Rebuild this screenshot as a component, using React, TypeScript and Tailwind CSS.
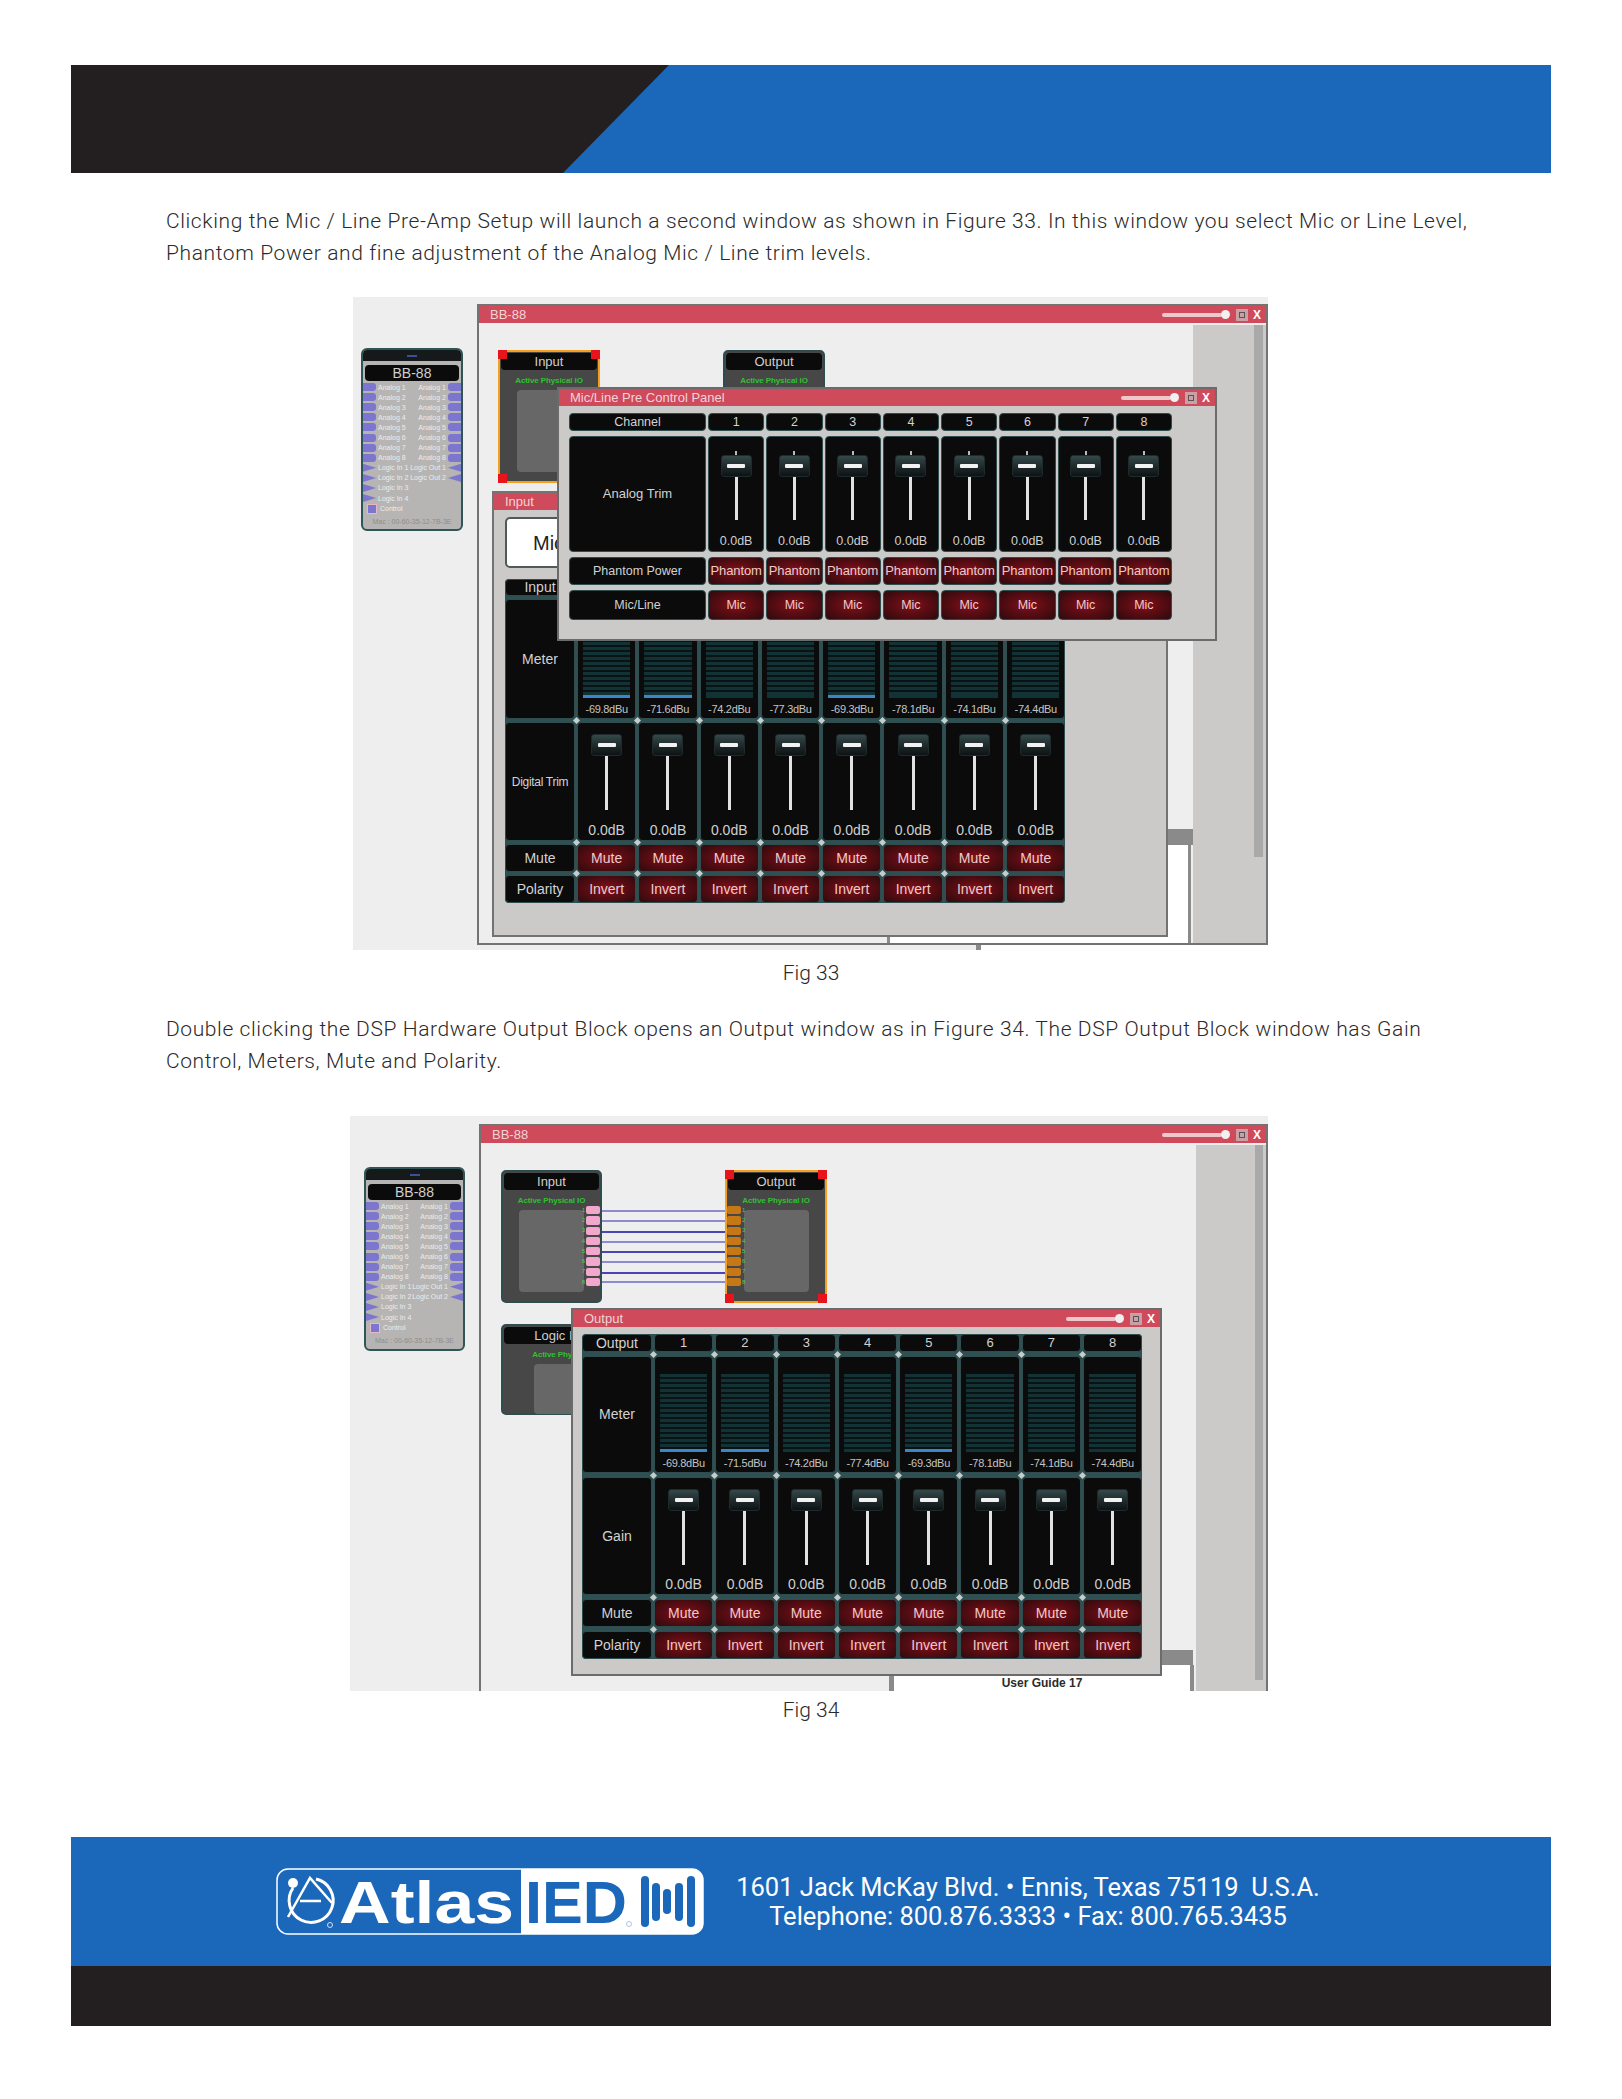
const channels = [1, 2, 3, 4, 5, 6, 7, 8];

const meterInput = ['-69.8dBu', '-71.6dBu', '-74.2dBu', '-77.3dBu', '-69.3dBu', '-78.1dBu', '-74.1dBu', '-74.4dBu'];
const meterOutput = ['-69.8dBu', '-71.5dBu', '-74.2dBu', '-77.4dBu', '-69.3dBu', '-78.1dBu', '-74.1dBu', '-74.4dBu'];
const activeMeters = [0, 1, 4];

const cellBase = 'relative flex items-center justify-center rounded-[4px] border border-[#2f4d4e] text-[#d2d2d2]';
const darkCell = `${cellBase} bg-[#0b0b0b]`;
const redCell = `${cellBase} bg-[radial-gradient(ellipse_at_center,#86101a_0%,#5c0c13_45%,#2b0b0d_100%)] text-[#eccbcb]`;

function Dot() {
  return <span className="absolute -left-[4px] -top-[5px] z-10 h-[5px] w-[5px] rotate-45 bg-[#c5cccc]" />;
}

function TitleBar({ title, wide }: { title: string; wide?: boolean }) {
  return (
    <div className="flex h-[17px] shrink-0 items-center bg-[#cf4a5b] pl-[11px] pr-[4px] text-[13px] text-[#f0d5d8]">
      <span>{title}</span>
      <div className="ml-auto flex items-center">
        <span className={wide ? 'h-[4px] w-[60px] rounded-full bg-[#eec9cc]' : 'h-[4px] w-[50px] rounded-full bg-[#eec9cc]'} />
        <span className="-ml-[1px] h-[9px] w-[9px] rounded-full bg-[#f0f0f0]" />
        <span className="ml-[6px] flex h-[12px] w-[12px] items-center justify-center bg-[#c9a0a5]">
          <span className="h-[6px] w-[6px] border border-[#555]" />
        </span>
        <span className="ml-[4px] w-[10px] text-center text-[12px] font-bold leading-none text-white">X</span>
      </div>
    </div>
  );
}

function Slider({ tick, track }: { tick?: boolean; track: string }) {
  return (
    <div className="flex h-full w-full flex-col items-center">
      {tick ? <span className="mt-[14px] h-[4px] w-[2px] bg-[#bbb]" /> : <span className="mt-[11px]" />}
      <div className="flex h-[22px] w-[31px] items-center justify-center rounded-[3px] border border-[#1d2b2c] bg-gradient-to-b from-[#34484a] to-[#0e1314]">
        <span className="h-[4px] w-[18px] rounded-[1px] bg-[#f2f2f2]" />
      </div>
      <span className={track} />
      <span className="mt-auto pb-[2px] leading-[16px] text-[#cfcfcf]">0.0dB</span>
    </div>
  );
}

function Meter({ value, active }: { value: string; active: boolean }) {
  return (
    <div className="flex h-full w-full flex-col px-[5px] pt-[17px]">
      <div className="flex-1 bg-[repeating-linear-gradient(to_bottom,#113335_0,#113335_3px,#0b1213_3px,#0b1213_5px)]" />
      <span className={active ? 'h-[3px] bg-[#3a86c8]' : 'h-[3px] bg-[#113335]'} />
      <span className="h-[20px] whitespace-nowrap text-center text-[11px] leading-[22px] tracking-[-0.3px] text-[#c4c4c4]">{value}</span>
    </div>
  );
}

function MicPanel() {
  return (
    <div className="absolute left-[204px] top-[90px] z-20 flex h-[254px] w-[660px] flex-col border-2 border-[#6b6b6b] bg-[#cbcac8]">
      <TitleBar title="Mic/Line Pre Control Panel" />
      <div className="grid grid-cols-[137px_repeat(8,56.25px)] grid-rows-[18px_116px_28px_30px] gap-x-[2px] gap-y-[5px] pl-[10px] pt-[7px] text-[12.5px]">
        <div className={darkCell}>Channel</div>
        {channels.map((c) => (
          <div key={c} className={darkCell}>{c}</div>
        ))}
        <div className={`${darkCell} text-[13px]`}>Analog Trim</div>
        {channels.map((c) => (
          <div key={c} className={darkCell}>
            <Dot />
            <Slider tick track="h-[43px] w-[3px] bg-[#e2e2e2]" />
          </div>
        ))}
        <div className={darkCell}>Phantom Power</div>
        {channels.map((c) => (
          <div key={c} className={`${redCell} text-[13px] tracking-[-0.1px]`}>
            <Dot />
            Phantom
          </div>
        ))}
        <div className={darkCell}>Mic/Line</div>
        {channels.map((c) => (
          <div key={c} className={redCell}>
            <Dot />
            Mic
          </div>
        ))}
      </div>
    </div>
  );
}

function ChannelGrid({
  head,
  meters,
  trim,
  trimClass,
  rowsClass,
}: {
  head: string;
  meters: string[];
  trim: string;
  trimClass?: string;
  rowsClass: string;
}) {
  return (
    <div className={`grid w-fit grid-cols-[70px_repeat(8,59.3px)] gap-x-[2px] rounded-[4px] bg-[#2f5052] text-[14px] ${rowsClass}`}>
      <div className={darkCell}>{head}</div>
      {channels.map((c) => (
        <div key={c} className={`${darkCell} text-[13px]`}>{c}</div>
      ))}
      <div className={darkCell}>Meter</div>
      {meters.map((m, i) => (
        <div key={m} className={darkCell}>
          <Dot />
          <Meter value={m} active={activeMeters.includes(i)} />
        </div>
      ))}
      <div className={`${darkCell} ${trimClass ?? ''}`}>{trim}</div>
      {channels.map((c) => (
        <div key={c} className={darkCell}>
          <Dot />
          <Slider track="h-[54px] w-[3px] bg-[#e2e2e2]" />
        </div>
      ))}
      <div className={darkCell}>Mute</div>
      {channels.map((c) => (
        <div key={c} className={redCell}>
          <Dot />
          Mute
        </div>
      ))}
      <div className={darkCell}>Polarity</div>
      {channels.map((c) => (
        <div key={c} className={redCell}>
          <Dot />
          Invert
        </div>
      ))}
    </div>
  );
}

function Block({
  title,
  className,
  selected,
  hideCorner,
  ports,
  portColor,
  small,
}: {
  title: string;
  className: string;
  selected?: boolean;
  hideCorner?: boolean;
  ports?: 'left' | 'right';
  portColor?: string;
  small?: boolean;
}) {
  return (
    <div className={`absolute rounded-[5px] border-2 bg-[#474747] ${selected ? 'border-[#f2a01e]' : 'border-[#2f4d4e]'} ${className}`}>
      <div className="mx-[1px] mt-[1px] flex h-[17px] items-center justify-center rounded-[4px] bg-[#0b0b0b] text-[13px] text-[#cfcfcf]">{title}</div>
      <div className="mt-[4px] whitespace-nowrap text-center text-[8px] font-bold leading-[14px] tracking-[-0.1px] text-[#30c030]">Active Physical IO</div>
      <div className={small ? 'mx-auto mt-[2px] h-[50px] w-[65px] rounded-[4px] bg-[#676767]' : 'mx-auto mt-[2px] h-[82px] w-[65px] rounded-[4px] bg-[#676767]'} />
      {ports === 'right' && (
        <div className="absolute right-0 top-[34px] flex flex-col gap-[2px]">
          {channels.map((c) => (
            <div key={c} className="flex h-[8.3px] items-center gap-[1px]">
              <span className="text-[6px] text-[#4fd04f]">{c}</span>
              <span className={`h-[8.3px] w-[14px] rounded-[2px] ${portColor}`} />
            </div>
          ))}
        </div>
      )}
      {ports === 'left' && (
        <div className="absolute left-0 top-[34px] flex flex-col gap-[2px]">
          {channels.map((c) => (
            <div key={c} className="flex h-[8.3px] items-center gap-[1px]">
              <span className={`h-[8.3px] w-[14px] rounded-[2px] ${portColor}`} />
              <span className="text-[6px] text-[#4fd04f]">{c}</span>
            </div>
          ))}
        </div>
      )}
      {selected && (
        <>
          <span className="absolute -left-[2px] -top-[2px] h-[9px] w-[9px] bg-[#e8141c]" />
          <span className="absolute -right-[2px] -top-[2px] h-[9px] w-[9px] bg-[#e8141c]" />
          <span className="absolute -bottom-[2px] -left-[2px] h-[9px] w-[9px] bg-[#e8141c]" />
          {!hideCorner && <span className="absolute -bottom-[2px] -right-[2px] h-[9px] w-[9px] bg-[#e8141c]" />}
        </>
      )}
    </div>
  );
}

function PortRow({ left, right, tri }: { left: string; right?: string; tri?: boolean }) {
  return (
    <div className="flex h-[10.1px] items-center text-[7px] leading-none text-[#ececec]">
      <span className={tri ? 'h-[8px] w-[13px] bg-[#7d76cf] [clip-path:polygon(0_0,100%_50%,0_100%)]' : 'h-[8px] w-[13px] rounded-r-[3px] bg-[#7d76cf]'} />
      <span className="ml-[2px]">{left}</span>
      {right && <span className="ml-auto mr-[2px]">{right}</span>}
      {right && (
        <span className={tri ? 'h-[8px] w-[13px] bg-[#7d76cf] [clip-path:polygon(100%_0,0_50%,100%_100%)]' : 'h-[8px] w-[13px] rounded-l-[3px] bg-[#7d76cf]'} />
      )}
    </div>
  );
}

function Device({ className }: { className: string }) {
  return (
    <div className={`absolute overflow-hidden rounded-[6px] border-2 border-[#2f5556] bg-[#b6b5b4] ${className}`}>
      <div className="flex h-[11px] items-center justify-center bg-[#15191a]">
        <span className="h-[2px] w-[10px] bg-[#3b4f9a]" />
      </div>
      <div className="mx-[2px] mt-[4px] flex h-[16px] items-center justify-center rounded-[4px] bg-[#0b0b0b] text-[14px] text-[#cfcfcf]">BB-88</div>
      <div className="mt-[1px]">
        {channels.map((c) => (
          <PortRow key={c} left={`Analog ${c}`} right={`Analog ${c}`} />
        ))}
        <PortRow tri left="Logic In 1" right="Logic Out 1" />
        <PortRow tri left="Logic In 2" right="Logic Out 2" />
        <PortRow tri left="Logic In 3" />
        <PortRow tri left="Logic In 4" />
      </div>
      <div className="ml-[4px] mt-[1px] flex h-[10px] items-center gap-[3px] text-[7px] text-[#ececec]">
        <span className="h-[10px] w-[10px] border border-[#e8b8c8] bg-[#7d76cf]" />
        Control
      </div>
      <div className="mt-[3px] whitespace-nowrap text-center text-[7px] text-[#8d8d8d]">Mac : 00-60-35-12-7B-3E</div>
    </div>
  );
}

function WindowFrame({ className }: { className: string }) {
  return (
    <div className={`absolute flex flex-col border-2 border-[#737373] bg-[#eeeeee] ${className}`}>
      <TitleBar title="BB-88" wide />
    </div>
  );
}

function Figure33() {
  return (
    <div className="relative ml-[353px] h-[653px] w-[915px] overflow-hidden bg-[#eeeeee] font-['Liberation_Sans',sans-serif]">
      <WindowFrame className="left-[124px] top-[7px] h-[641px] w-[791px]" />
      <div className="absolute left-[840px] top-[28px] h-[618px] w-[73px] bg-[#cbcac8]" />
      <div className="absolute left-[901px] top-[28px] h-[532px] w-[9px] bg-[#a9a9a9]" />
      <div className="absolute left-[815px] top-[532px] h-[16px] w-[25px] bg-[#8a8a8a]" />
      <div className="absolute left-[815px] top-[548px] h-[98px] w-[20px] bg-white" />
      <div className="absolute left-[835px] top-[548px] h-[98px] w-[3px] bg-[#8a8a8a]" />
      <div className="absolute left-[537px] top-[640px] h-[6px] w-[298px] bg-white" />
      <div className="absolute left-[534px] top-[640px] h-[6px] w-[3px] bg-[#8a8a8a]" />
      <div className="absolute left-[623px] top-[648px] h-[5px] w-[5px] bg-[#8a8a8a]" />
      <div className="absolute left-[628px] top-[648px] h-[5px] w-[287px] bg-white" />

      <Device className="left-[8px] top-[51px] h-[183px] w-[102px]" />
      <Block title="Input" selected hideCorner className="left-[145px] top-[53px] h-[133px] w-[102px]" />
      <Block title="Output" className="left-[370px] top-[53px] h-[133px] w-[102px]" />

      <div className="absolute left-[139px] top-[194px] flex h-[446px] w-[676px] flex-col border-2 border-[#737373] bg-[#cbcac8]">
        <TitleBar title="Input" />
        <div className="pl-[11px]">
          <div className="mt-[7px] flex h-[51px] w-[200px] items-center rounded-[5px] border-2 border-[#50595a] bg-white pl-[26px] text-[20px] text-[#222]">Mic</div>
          <div className="mt-[11px]">
            <ChannelGrid
              head="Input"
              meters={meterInput}
              trim="Digital Trim"
              trimClass="text-[12px] tracking-[-0.3px]"
              rowsClass="grid-rows-[17px_120px_119px_28px_28px] gap-y-[3px]"
            />
          </div>
        </div>
      </div>

      <MicPanel />
    </div>
  );
}

const wireYs = [95, 105, 116, 126, 136, 146, 157, 166];

function Figure34() {
  return (
    <div className="relative ml-[350px] h-[575px] w-[918px] overflow-hidden bg-[#eeeeee] font-['Liberation_Sans',sans-serif]">
      <WindowFrame className="left-[129px] top-[8px] h-[570px] w-[789px]" />
      <div className="absolute left-[846px] top-[29px] h-[546px] w-[70px] bg-[#cbcac8]" />
      <div className="absolute left-[905px] top-[29px] h-[535px] w-[8px] bg-[#a9a9a9]" />
      <div className="absolute left-[811px] top-[534px] h-[15px] w-[32px] bg-[#8a8a8a]" />
      <div className="absolute left-[811px] top-[549px] h-[26px] w-[29px] bg-white" />
      <div className="absolute left-[840px] top-[549px] h-[26px] w-[4px] bg-[#8a8a8a]" />
      <div className="absolute left-[544px] top-[560px] h-[15px] w-[296px] bg-white text-center text-[12px] font-bold leading-[15px] text-[#2b2b2b]">User Guide 17</div>
      <div className="absolute left-[539px] top-[560px] h-[15px] w-[5px] bg-[#8a8a8a]" />

      <Device className="left-[14px] top-[51px] h-[184px] w-[101px]" />
      <Block title="Input" ports="right" portColor="bg-[#f2a8cc]" className="left-[151px] top-[54px] h-[133px] w-[101px]" />
      <Block title="Output" selected ports="left" portColor="bg-[#c67716]" className="left-[375px] top-[54px] h-[133px] w-[102px]" />
      <svg className="absolute left-[252px] top-0" width="123" height="200" viewBox="0 0 123 200">
        {wireYs.map((y, i) => (
          <line key={y} x1="0" x2="123" y1={y} y2={y} stroke={i === 2 || i === 4 || i === 6 ? '#4a45b0' : '#8f8ad0'} strokeWidth="2" />
        ))}
      </svg>
      <Block title="Logic Input" small className="left-[151px] top-[208px] h-[91px] w-[130px]" />

      <div className="absolute left-[221px] top-[192px] z-20 flex h-[368px] w-[591px] flex-col border-2 border-[#6b6b6b] bg-[#cbcac8]">
        <TitleBar title="Output" />
        <div className="pl-[9px] pt-[7px]">
          <ChannelGrid
            head="Output"
            meters={meterOutput}
            trim="Gain"
            rowsClass="grid-rows-[18px_117px_118px_28px_28px] gap-y-[4px]"
          />
        </div>
      </div>
    </div>
  );
}

function Logo() {
  return (
    <svg width="428" height="67" viewBox="0 0 428 67" className="shrink-0">
      <path d="M245 1 H416 a11 11 0 0 1 11 11 V55 a11 11 0 0 1 -11 11 H245 Z" fill="#fff" />
      <rect x="1" y="1" width="426" height="65" rx="11" fill="none" stroke="#fff" strokeWidth="1.5" />
      <path d="M17 20 A22 22 0 1 0 40 11" fill="none" stroke="#fff" strokeWidth="3" />
      <circle cx="17" cy="15" r="5" fill="#fff" />
      <path d="M12 49 L34 10 L56 35 M24 33 H45" fill="none" stroke="#fff" strokeWidth="2.5" />
      <circle cx="54" cy="57" r="2.5" fill="none" stroke="#cfe0f2" strokeWidth="1" />
      <text x="63" y="55" fontFamily="'Liberation Sans', sans-serif" fontWeight="700" fontSize="60" fill="#fff" textLength="175" lengthAdjust="spacingAndGlyphs">Atlas</text>
      <text x="249" y="55" fontFamily="'Liberation Sans', sans-serif" fontWeight="700" fontSize="60" fill="#1b68bb" textLength="102" lengthAdjust="spacingAndGlyphs">IED</text>
      <circle cx="353" cy="56" r="2.5" fill="none" stroke="#a9c8e8" strokeWidth="1" />
      <rect x="365" y="8" width="8" height="51" rx="4" fill="#1b68bb" />
      <rect x="376" y="15" width="8" height="38" rx="4" fill="#1b68bb" />
      <rect x="387" y="21" width="8" height="25" rx="4" fill="#1b68bb" />
      <rect x="399" y="15" width="8" height="38" rx="4" fill="#1b68bb" />
      <rect x="411" y="8" width="8" height="51" rx="4" fill="#1b68bb" />
    </svg>
  );
}

export default function App() {
  return (
    <div className="h-[2099px] w-[1622px] overflow-hidden bg-white pt-[65px] font-['Roboto',sans-serif] font-light text-[#2b2a2a]">
      <div className="mx-[71px] h-[108px] bg-[#1b68bb]">
        <div className="h-full w-full bg-[#231f20] [clip-path:polygon(0_0,598px_0,492px_100%,0_100%)]" />
      </div>

      <p className="ml-[166px] mt-[32px] w-[1320px] text-[21px] leading-[32px] tracking-[0.6px]">
        Clicking the Mic / Line Pre-Amp Setup will launch a second window as shown in Figure 33. In this window you select Mic or Line Level, Phantom Power and fine adjustment of the Analog Mic / Line trim levels.
      </p>

      <div className="mt-[28px]">
        <Figure33 />
      </div>
      <div className="mt-[11px] text-center text-[21px] leading-[24px]">Fig 33</div>

      <p className="ml-[166px] mt-[28px] w-[1320px] text-[21px] leading-[32px] tracking-[0.6px]">
        Double clicking the DSP Hardware Output Block opens an Output window as in Figure 34. The DSP Output Block window has Gain Control, Meters, Mute and Polarity.
      </p>

      <div className="mt-[39px]">
        <Figure34 />
      </div>
      <div className="mt-[7px] text-center text-[21px] leading-[24px]">Fig 34</div>

      <footer className="mx-[71px] mt-[115px]">
        <div className="flex h-[129px] items-center bg-[#1b68bb] pl-[205px] text-white">
          <Logo />
          <div className="ml-[30px] w-[588px] whitespace-nowrap text-center text-[25.5px] font-normal leading-[29px]">
            <div>1601 Jack McKay Blvd. • Ennis, Texas 75119&nbsp; U.S.A.</div>
            <div>Telephone: 800.876.3333 • Fax: 800.765.3435</div>
          </div>
        </div>
        <div className="h-[60px] bg-[#231f20]" />
      </footer>
    </div>
  );
}
